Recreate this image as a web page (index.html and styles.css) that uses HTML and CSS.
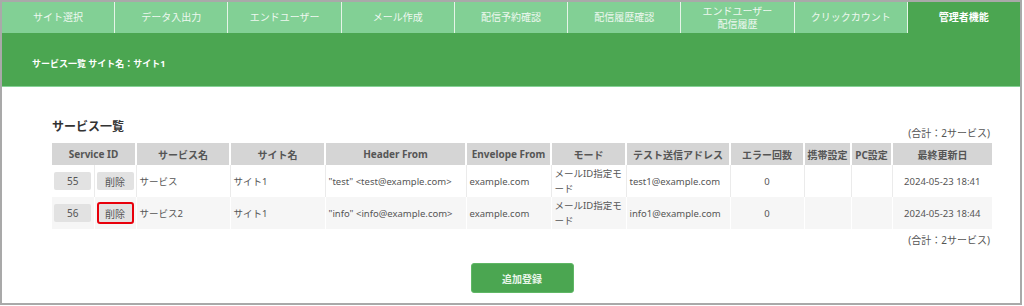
FILE: index.html
```html
<!DOCTYPE html>
<html lang="ja">
<head>
    <meta charset="UTF-8">
    <meta name="viewport" content="width=device-width, initial-scale=1.0">
    <title>サービス一覧</title>
    <link rel="stylesheet" href="styles.css">
</head>
<body>
    <div class="frame">
        <!-- Top navigation -->
        <nav class="tabs">
            <div class="tab">サイト選択</div>
            <div class="tab">データ入出力</div>
            <div class="tab">エンドユーザー</div>
            <div class="tab">メール作成</div>
            <div class="tab">配信予約確認</div>
            <div class="tab">配信履歴確認</div>
            <div class="tab">エンドユーザー<br>配信履歴</div>
            <div class="tab">クリックカウント</div>
            <div class="tab active">管理者機能</div>
        </nav>

        <div class="band">サービス一覧 サイト名：サイト1</div>

        <main class="content">
            <div class="list-head">
                <h2 class="section-title">サービス一覧</h2>
                <p class="total">(合計：2サービス)</p>
            </div>

            <table class="services">
                <colgroup>
                    <col class="c-id">
                    <col class="c-del">
                    <col class="c-name">
                    <col class="c-site">
                    <col class="c-header">
                    <col class="c-envelope">
                    <col class="c-mode">
                    <col class="c-test">
                    <col class="c-error">
                    <col class="c-mobile">
                    <col class="c-pc">
                    <col class="c-date">
                </colgroup>
                <thead>
                    <tr>
                        <th colspan="2">Service ID</th>
                        <th>サービス名</th>
                        <th>サイト名</th>
                        <th>Header From</th>
                        <th>Envelope From</th>
                        <th>モード</th>
                        <th>テスト送信アドレス</th>
                        <th>エラー回数</th>
                        <th>携帯設定</th>
                        <th>PC設定</th>
                        <th>最終更新日</th>
                    </tr>
                </thead>
                <tbody>
                    <tr>
                        <td class="center"><span class="chip">55</span></td>
                        <td class="center"><button class="chip">削除</button></td>
                        <td>サービス</td>
                        <td>サイト1</td>
                        <td>"test" &lt;test@example.com&gt;</td>
                        <td>example.com</td>
                        <td>メールID指定モード</td>
                        <td>test1@example.com</td>
                        <td class="center">0</td>
                        <td></td>
                        <td></td>
                        <td class="center">2024-05-23 18:41</td>
                    </tr>
                    <tr>
                        <td class="center"><span class="chip">56</span></td>
                        <td class="center"><button class="chip marked">削除</button></td>
                        <td>サービス2</td>
                        <td>サイト1</td>
                        <td>"info" &lt;info@example.com&gt;</td>
                        <td>example.com</td>
                        <td>メールID指定モード</td>
                        <td>info1@example.com</td>
                        <td class="center">0</td>
                        <td></td>
                        <td></td>
                        <td class="center">2024-05-23 18:44</td>
                    </tr>
                </tbody>
            </table>

            <p class="total bottom">(合計：2サービス)</p>

            <div class="actions">
                <button class="add-btn">追加登録</button>
            </div>
        </main>
    </div>
</body>
</html>
```

FILE: styles.css
```css
body {
    margin: 0;
    font-family: "Noto Sans", "Noto Sans CJK JP", sans-serif;
    font-size: 10px;
    color: #555;
    background-color: #fff;
}
.frame {
    width: 1018px;
    height: 301px;
    border: 2px solid #a9a9a9;
    overflow: hidden;
}
.tabs {
    display: flex;
    height: 31px;
    background-color: #82d095;
}
.tab {
    flex: 1;
    display: flex;
    align-items: center;
    justify-content: center;
    text-align: center;
    line-height: 13px;
    color: #eef8f0;
    border-left: 1px solid #e6f4e8;
}
.tab:first-child {
    border-left: none;
}
.tab.active {
    background-color: #4ba651;
    color: #fff;
    font-weight: bold;
}
.band {
    box-sizing: border-box;
    height: 54px;
    padding: 8px 30px 0;
    display: flex;
    align-items: center;
    background-color: #4ba651;
    border-bottom: 1px solid #86d297;
    color: #fff;
    font-size: 9px;
    font-weight: bold;
}
.content {
    padding: 32px 28px 0 50px;
}
.list-head {
    display: flex;
    justify-content: space-between;
    align-items: flex-end;
}
.section-title {
    margin: 0 0 4px;
    font-size: 12px;
    line-height: 16px;
    color: #333;
}
.total {
    margin: 0;
    padding-right: 2px;
    text-align: right;
    line-height: 12px;
}
.total.bottom {
    margin-top: 5px;
}
.services {
    width: 940px;
    margin-top: 4px;
    table-layout: fixed;
    border-collapse: collapse;
}
.c-id { width: 42px; }
.c-del { width: 42px; }
.c-name { width: 94px; }
.c-site { width: 95px; }
.c-header { width: 141px; }
.c-envelope { width: 85px; }
.c-mode { width: 75px; }
.c-test { width: 104px; }
.c-error { width: 74px; }
.c-mobile { width: 47px; }
.c-pc { width: 41px; }
.c-date { width: 100px; }
.services th {
    height: 22px;
    padding: 0;
    background-color: #d5d5d5;
    border-left: 2px solid #fff;
    font-weight: bold;
    color: #555;
}
.services th:first-child {
    border-left: none;
}
.services td {
    height: 32px;
    padding: 0 2px 0 3px;
    border-left: 1px solid #ebebeb;
    font-size: 9.5px;
    line-height: 15px;
}
.services td:first-child {
    border-left: none;
}
.services tbody tr:nth-child(2) td {
    background-color: #f6f6f6;
    border-left-color: #fff;
}
.services td.center {
    text-align: center;
    padding: 0;
}
.chip {
    box-sizing: border-box;
    display: inline-flex;
    align-items: center;
    justify-content: center;
    width: 37px;
    height: 18px;
    padding: 0;
    vertical-align: middle;
    background-color: #e2e2e2;
    border: none;
    border-radius: 2px;
    font-family: inherit;
    font-size: 10px;
    color: #555;
}
.chip.marked {
    height: 22px;
    border: 2px solid #e8000b;
    border-radius: 3px;
}
.actions {
    display: flex;
    justify-content: center;
    margin-top: 17px;
}
.add-btn {
    width: 103px;
    height: 30px;
    background-color: #4ba651;
    border: 1px solid #5fb765;
    border-radius: 3px;
    font-family: inherit;
    font-size: 10px;
    font-weight: bold;
    color: #e8f5e9;
}
```
